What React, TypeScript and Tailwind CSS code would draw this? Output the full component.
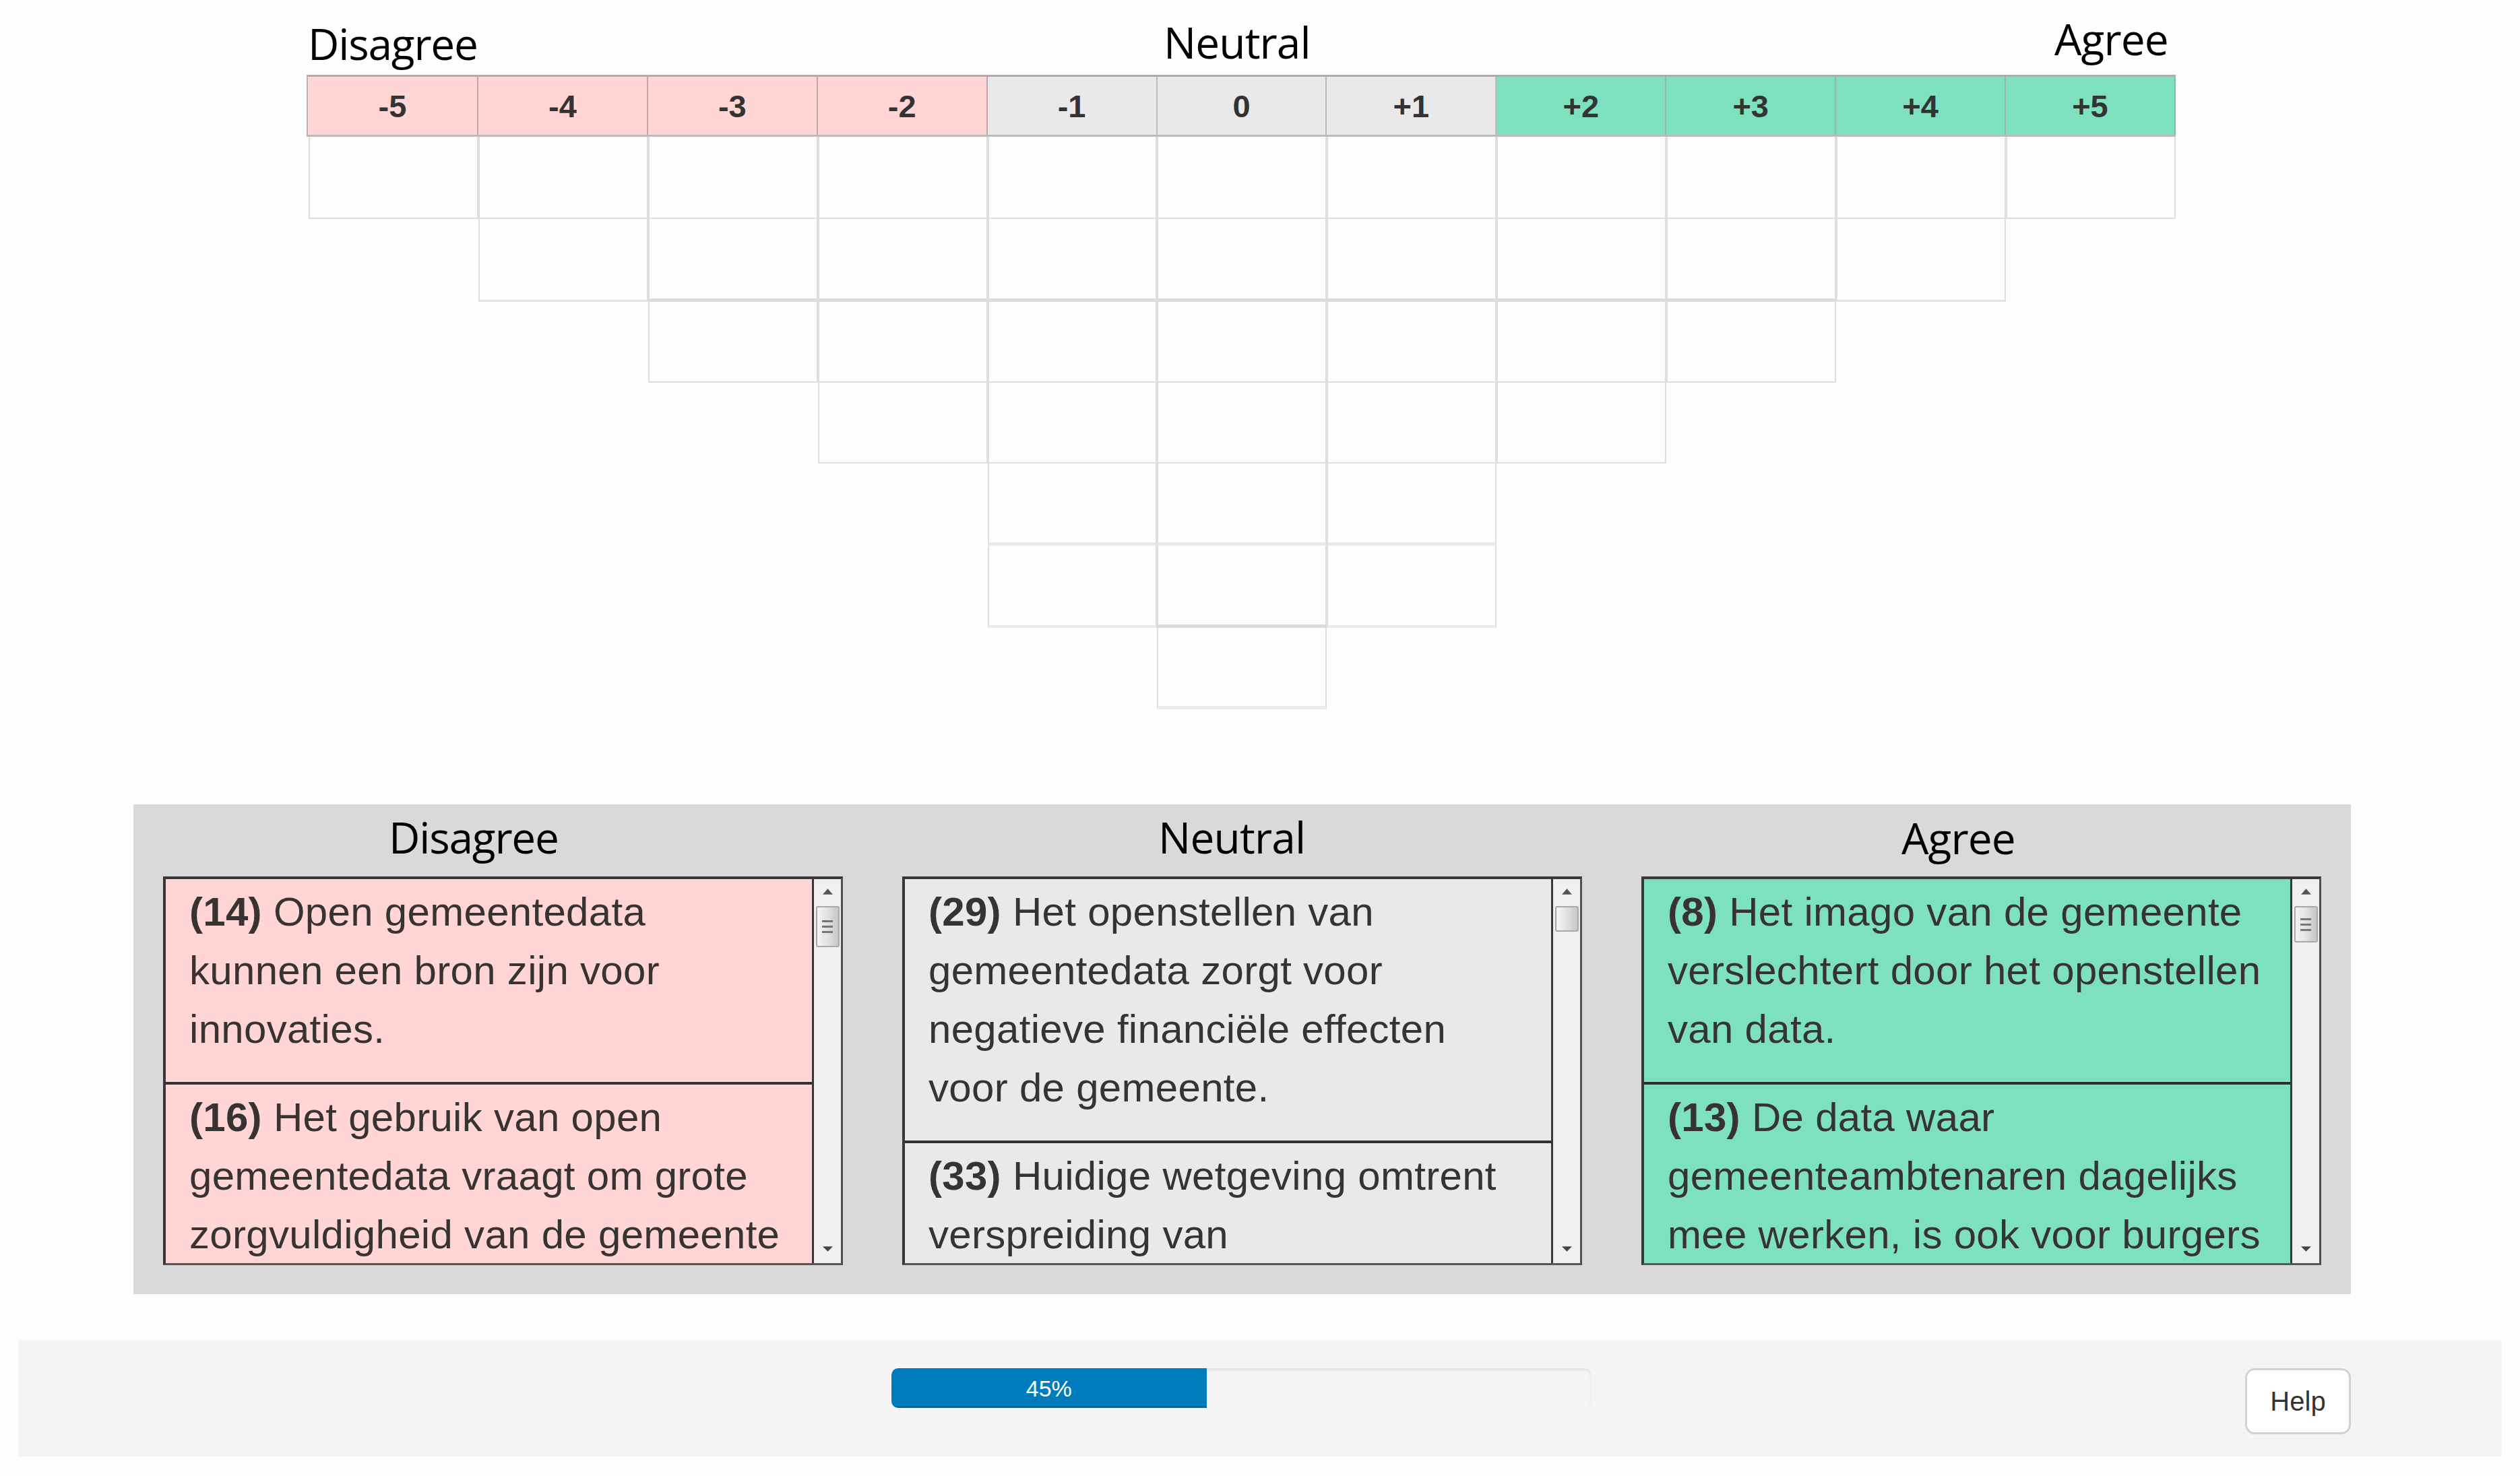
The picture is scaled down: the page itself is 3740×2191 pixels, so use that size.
import type { ReactNode } from 'react';
import clsx from 'clsx';

interface Statement {
  id: number;
  text: string;
}

interface Pile {
  title: string;
  titleClass: string;
  cardClass: string;
  thumbClass: string;
  grip: boolean;
  statements: Statement[];
}

const COLUMNS = ['-5', '-4', '-3', '-2', '-1', '0', '+1', '+2', '+3', '+4', '+5'];

// how many columns stay empty on each side of the pyramid, row by row
const ROWS = [
  { skip: 0, height: 'h-[122px]', line: 'border-b-2 border-b-[#dedede]', edge: '' },
  { skip: 1, height: 'h-[123px]', line: 'border-b-[5px] border-b-[#dcdcdc]', edge: 'border-b-[3px] border-b-[#e2e2e2]' },
  { skip: 2, height: 'h-[120px]', line: 'border-b-2 border-b-[#dcdcdc]', edge: '' },
  { skip: 3, height: 'h-[120px]', line: 'border-b-2 border-b-[#dedede]', edge: '' },
  { skip: 4, height: 'h-[122px]', line: 'border-b-[5px] border-b-[#e9e9e9]', edge: '' },
  { skip: 4, height: 'h-[122px]', line: 'border-b-[5px] border-b-[#dadada]', edge: 'border-b-[4px] border-b-[#ebebeb]' },
  { skip: 5, height: 'h-[121px]', line: 'border-b-[5px] border-b-[#ececec]', edge: '' },
];

const PILES: Pile[] = [
  {
    title: 'Disagree',
    titleClass: 'pl-[335px] pt-[17px] tracking-[-1.2px]',
    cardClass: 'bg-[#ffd5d5]',
    thumbClass: 'h-[61px]',
    grip: true,
    statements: [
      { id: 14, text: 'Open gemeentedata kunnen een bron zijn voor innovaties.' },
      { id: 16, text: 'Het gebruik van open gemeentedata vraagt om grote zorgvuldigheid van de gemeente' },
    ],
  },
  {
    title: 'Neutral',
    titleClass: 'pl-[380px] pt-[17px] tracking-[-0.8px]',
    cardClass: 'bg-[#e9e9e9]',
    thumbClass: 'h-[38px]',
    grip: false,
    statements: [
      { id: 29, text: 'Het openstellen van gemeentedata zorgt voor negatieve financiële effecten voor de gemeente.' },
      { id: 33, text: 'Huidige wetgeving omtrent verspreiding van' },
    ],
  },
  {
    title: 'Agree',
    titleClass: 'pl-[386px] pt-[18px] tracking-[-0.9px]',
    cardClass: 'bg-[#7de0bf]',
    thumbClass: 'h-[54px]',
    grip: true,
    statements: [
      { id: 8, text: 'Het imago van de gemeente verslechtert door het openstellen van data.' },
      { id: 13, text: 'De data waar gemeenteambtenaren dagelijks mee werken, is ook voor burgers' },
    ],
  },
];

const Label = ({ className, children }: { className?: string; children: ReactNode }) => (
  <div className={clsx("font-['Open_Sans',sans-serif] text-[64px] leading-[64px] text-black whitespace-nowrap", className)}>
    {children}
  </div>
);

const headerColor = (i: number) => {
  if (i < 4) return 'bg-[#ffd5d5] border-[#c4a4a4]';
  if (i < 7) return 'bg-[#e9e9e9] border-[#bcbcbc]';
  return 'bg-[#7de0bf] border-[#99b5a8]';
};

const SortGrid = () => (
  <div>
    <div className="flex h-[111px]">
      <Label className="ml-[457px] w-[1270px] pt-[33px] tracking-[-1.2px]">Disagree</Label>
      <Label className="w-[1322px] pt-[31px] tracking-[-0.9px]">Neutral</Label>
      <Label className="pt-[26px] tracking-[-0.9px]">Agree</Label>
    </div>
    <div className="ml-[455px] flex h-[92px] w-[2774px] border-l-2 border-y-[3px] border-t-[#b3a9a9] border-b-[#bcbaba] border-l-[#c4b0b0]">
      {COLUMNS.map((c, i) => (
        <div
          key={c}
          className={clsx(
            'flex items-center justify-center border-r-2 text-[47px] leading-none font-bold text-[#333]',
            i === 0 ? 'w-[253px]' : 'w-[251.9px]',
            headerColor(i),
          )}
        >
          {c}
        </div>
      ))}
    </div>
    {ROWS.map((row, r) => (
      <div key={r} className={clsx('ml-[458px] flex w-[2771px]', row.height)}>
        {COLUMNS.map((c, i) => {
          const hidden = i < row.skip || i > 10 - row.skip;
          const isEdge = i === row.skip || i === 10 - row.skip;
          return (
            <div
              key={c}
              className={clsx(
                'w-[251.9px]',
                !hidden && 'border-x-2 border-x-[#dedede]',
                !hidden && (isEdge && row.edge ? row.edge : row.line),
              )}
            />
          );
        })}
      </div>
    ))}
  </div>
);

const ScrollBar = ({ thumbClass, grip }: { thumbClass: string; grip: boolean }) => (
  <div className="flex w-[40px] shrink-0 flex-col items-center bg-[#f0f0f0]">
    <svg className="mt-[14px] h-[9px] w-[15px] shrink-0" viewBox="0 0 16 9">
      <path d="M8 0 L16 9 H0 Z" fill="#555" />
    </svg>
    <div
      className={clsx(
        'mt-[17px] flex w-[35px] shrink-0 flex-col items-center justify-center gap-[5px] rounded-[3px] border-2 border-[#a9a9a9] bg-linear-to-r from-[#f4f4f4] via-[#e2e2e4] to-[#c6c6ca]',
        thumbClass,
      )}
    >
      {grip && [0, 1, 2].map(n => <div key={n} className="h-[3px] w-[16px] bg-[#777]" />)}
    </div>
    <svg className="mt-auto mb-[17px] h-[8px] w-[15px] shrink-0" viewBox="0 0 16 8">
      <path d="M0 0 H16 L8 8 Z" fill="#444" />
    </svg>
  </div>
);

const PileBox = ({ pile }: { pile: Pile }) => (
  <div className="w-[1009px]">
    <Label className={clsx('h-[107px]', pile.titleClass)}>{pile.title}</Label>
    <div className="flex h-[577px] overflow-hidden border-t-4 border-r-[3px] border-b-[3px] border-l-4 border-[#3a3636] border-r-[#505050] border-b-[#555]">
      <div className="flex-1 overflow-hidden border-r-[3px] border-[#3a3636]">
        {pile.statements.map(s => (
          <div
            key={s.id}
            className={clsx(
              'border-b-4 border-[#332f2f] pt-[5px] pr-[39px] pb-[35px] pl-[35px] text-[60px] leading-[87px] tracking-[0.3px] text-[#383333]',
              pile.cardClass,
            )}
          >
            <strong className="font-bold">{`(${s.id})`}</strong> {s.text}
          </div>
        ))}
      </div>
      <ScrollBar thumbClass={pile.thumbClass} grip={pile.grip} />
    </div>
  </div>
);

const Footer = ({ progress }: { progress: number }) => (
  <div className="mt-[68px] ml-[27px] flex h-[173px] w-[3686px] items-start bg-[#f4f4f4] pt-[42px]">
    <div className="ml-[1296px] h-[59px] w-[1039px] overflow-hidden rounded-[10px] bg-[#f5f5f5] shadow-[inset_0_3px_5px_rgba(0,0,0,0.08)]">
      <div
        className="flex h-full items-center justify-center bg-[#007cbc] text-[34px] leading-none text-white shadow-[inset_0_-3px_0_rgba(0,0,0,0.12)]"
        style={{ width: `${progress}%` }}
      >
        {`${progress}%`}
      </div>
    </div>
    <button className="ml-[970px] h-[98px] w-[157px] rounded-[14px] border-[3px] border-[#d2d2d2] bg-white text-[40px] leading-none text-[#333]">
      Help
    </button>
  </div>
);

export default function App() {
  return (
    <div className="h-[2191px] w-[3740px] overflow-hidden bg-[#fefefe] font-['Liberation_Sans',Arial,sans-serif]">
      <SortGrid />
      <div className="mt-[141px] ml-[198px] flex h-[727px] w-[3291px] gap-[88px] bg-[#d9d9d9] pl-[44px]">
        {PILES.map(p => <PileBox key={p.title} pile={p} />)}
      </div>
      <Footer progress={45} />
    </div>
  );
}
